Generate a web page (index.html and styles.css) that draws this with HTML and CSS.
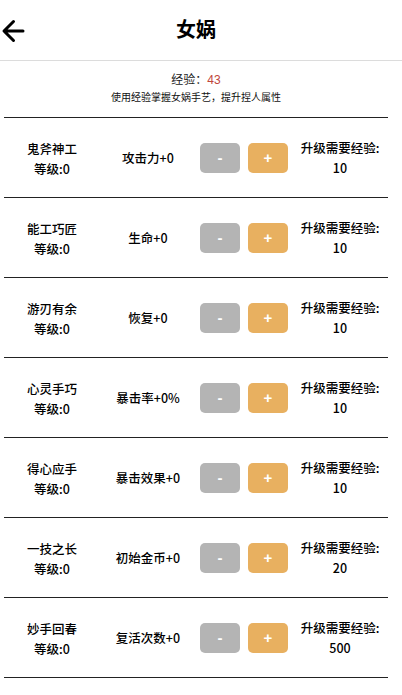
FILE: index.html
```html
<!DOCTYPE html>
<html lang="zh">
<head>
<meta charset="utf-8">
<title>女娲</title>
<link rel="stylesheet" href="styles.css">
</head>
<body>
<header class="topbar">
  <div class="topbar-inner">
    <span class="back">
      <svg width="24" height="26" viewBox="0 0 24 26" aria-hidden="true">
        <path d="M22 13H3.5M12.5 3.5L3 13l9.5 9.5" fill="none" stroke="#000" stroke-width="3" stroke-linecap="round" stroke-linejoin="round"/>
      </svg>
    </span>
    <h1 class="title">女娲</h1>
    <span class="spacer"></span>
  </div>
</header>
<main class="page">
  <section class="info">
    <div class="exp">经验：<span class="exp-num">43</span></div>
    <div class="hint">使用经验掌握女娲手艺，提升捏人属性</div>
  </section>
  <ul class="list">
    <li class="row">
      <div class="col name"><div>鬼斧神工</div><div>等级:0</div></div>
      <div class="col attr">攻击力+0</div>
      <div class="col btns"><button class="btn minus">-</button><button class="btn plus">+</button></div>
      <div class="col need"><div>升级需要经验:</div><div>10</div></div>
    </li>
    <li class="row">
      <div class="col name"><div>能工巧匠</div><div>等级:0</div></div>
      <div class="col attr">生命+0</div>
      <div class="col btns"><button class="btn minus">-</button><button class="btn plus">+</button></div>
      <div class="col need"><div>升级需要经验:</div><div>10</div></div>
    </li>
    <li class="row">
      <div class="col name"><div>游刃有余</div><div>等级:0</div></div>
      <div class="col attr">恢复+0</div>
      <div class="col btns"><button class="btn minus">-</button><button class="btn plus">+</button></div>
      <div class="col need"><div>升级需要经验:</div><div>10</div></div>
    </li>
    <li class="row">
      <div class="col name"><div>心灵手巧</div><div>等级:0</div></div>
      <div class="col attr">暴击率+0%</div>
      <div class="col btns"><button class="btn minus">-</button><button class="btn plus">+</button></div>
      <div class="col need"><div>升级需要经验:</div><div>10</div></div>
    </li>
    <li class="row">
      <div class="col name"><div>得心应手</div><div>等级:0</div></div>
      <div class="col attr">暴击效果+0</div>
      <div class="col btns"><button class="btn minus">-</button><button class="btn plus">+</button></div>
      <div class="col need"><div>升级需要经验:</div><div>10</div></div>
    </li>
    <li class="row">
      <div class="col name"><div>一技之长</div><div>等级:0</div></div>
      <div class="col attr">初始金币+0</div>
      <div class="col btns"><button class="btn minus">-</button><button class="btn plus">+</button></div>
      <div class="col need"><div>升级需要经验:</div><div>20</div></div>
    </li>
    <li class="row">
      <div class="col name"><div>妙手回春</div><div>等级:0</div></div>
      <div class="col attr">复活次数+0</div>
      <div class="col btns"><button class="btn minus">-</button><button class="btn plus">+</button></div>
      <div class="col need"><div>升级需要经验:</div><div>500</div></div>
    </li>
  </ul>
</main>
</body>
</html>
```

FILE: styles.css
```css
* { box-sizing: border-box; }
html, body { margin: 0; padding: 0; background: #fff; }
body {
  font-family: "Liberation Sans", "Noto Sans CJK SC", sans-serif;
  color: #111;
  width: 402px;
  overflow: hidden;
}
.topbar {
  height: 61px;
  border-bottom: 1px solid #dcdcdc;
}
.topbar-inner {
  width: 392px;
  height: 60px;
  display: grid;
  grid-template-columns: 40px 1fr 40px;
  align-items: center;
}
.back {
  display: flex;
  align-items: center;
  padding-left: 1px;
  padding-top: 1px;
}
.title {
  margin: 0;
  text-align: center;
  font-size: 20px;
  font-weight: 700;
  line-height: 24px;
  color: #000;
}
.page {
  width: 392px;
}
.info {
  padding: 10px 0 10px;
  text-align: center;
  color: #222;
}
.exp {
  font-size: 12px;
  line-height: 18px;
}
.exp-num { color: #c0463a; }
.hint {
  font-size: 10px;
  line-height: 18px;
  color: #111;
}
.list {
  list-style: none;
  margin: 0 0 0 4px;
  padding: 0;
  width: 384px;
  border-top: 1px solid #222;
}
.row {
  height: 80px;
  border-bottom: 1px solid #222;
  display: grid;
  grid-template-columns: repeat(4, 96px);
  align-items: center;
  font-family: "Noto Sans CJK SC", "Liberation Sans", sans-serif;
  font-size: 12.5px;
  font-weight: 500;
  color: #000;
}
.col {
  text-align: center;
  line-height: 20px;
}
.name { padding-top: 2px; }
.need { padding-top: 0; }
.btns {
  display: flex;
  justify-content: center;
  gap: 8px;
}
.btn {
  width: 40px;
  height: 30px;
  border: none;
  border-radius: 5px;
  color: #fff;
  font-family: "Liberation Sans", sans-serif;
  font-size: 15px;
  font-weight: 700;
  padding: 0;
  line-height: 30px;
}
.minus { background: #b4b4b4; }
.plus { background: #e8b060; }
```
